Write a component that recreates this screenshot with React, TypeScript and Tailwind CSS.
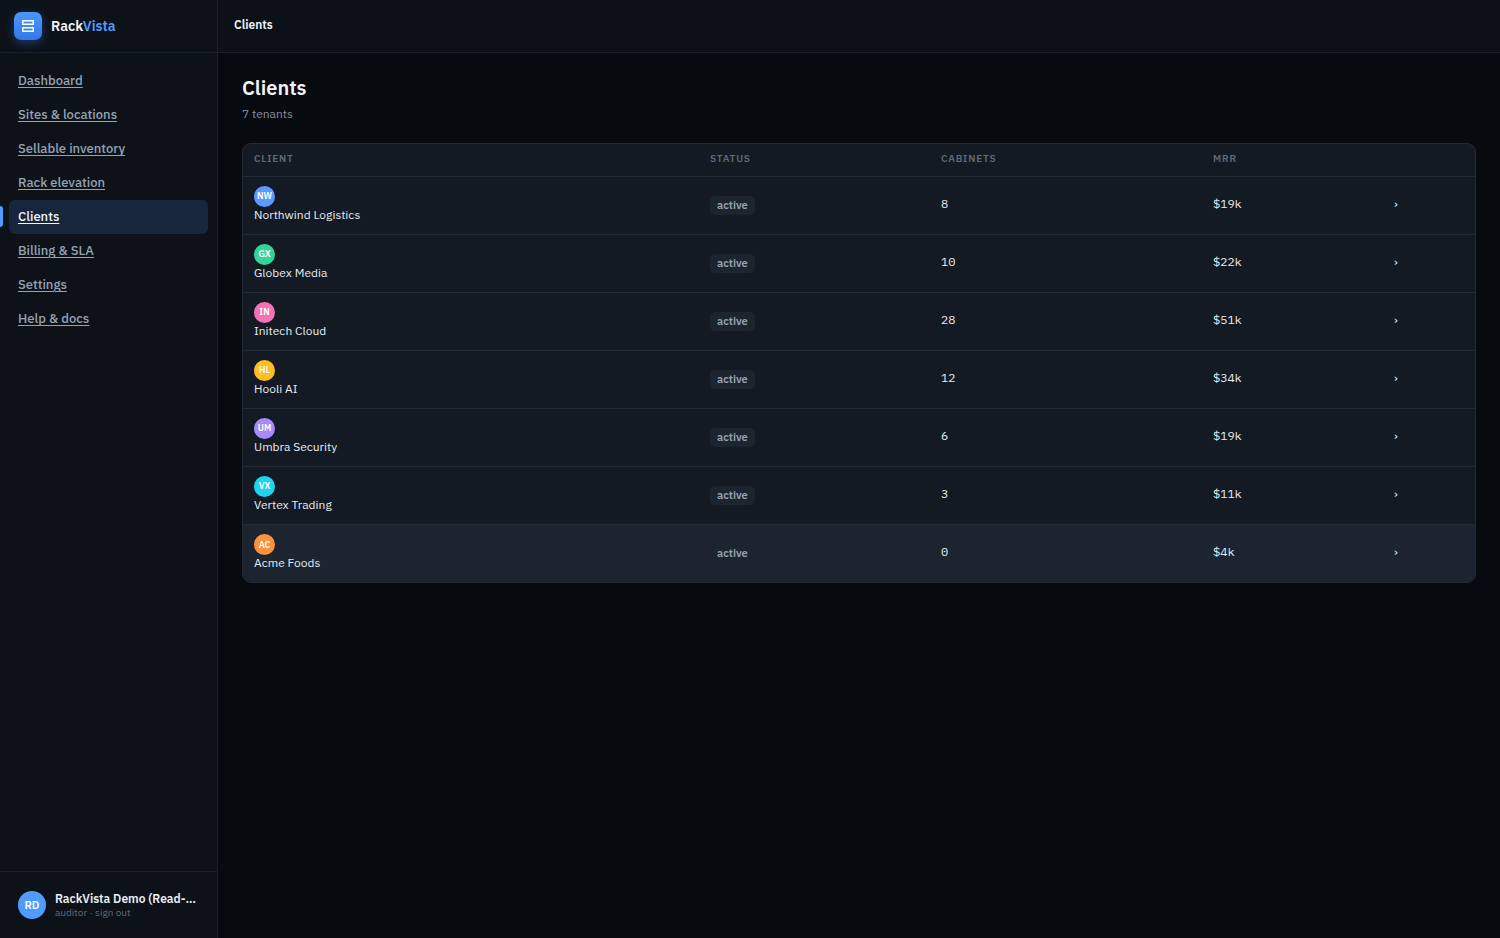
import React from "react";
import { clsx } from "clsx";

const navItems = [
  { name: "Dashboard", path: "#dashboard" },
  { name: "Sites & locations", path: "#sites" },
  { name: "Sellable inventory", path: "#inventory" },
  { name: "Rack elevation", path: "#racks" },
  { name: "Clients", path: "#clients" },
  { name: "Billing & SLA", path: "#billing" },
  { name: "Settings", path: "#settings" },
  { name: "Help & docs", path: "#help" },
];

const clients = [
  { code: "NW", name: "Northwind Logistics", status: "active", cabinets: 8, mrr: "$19k", color: "bg-[#5b9bff]" },
  { code: "GX", name: "Globex Media", status: "active", cabinets: 10, mrr: "$22k", color: "bg-[#34d399]" },
  { code: "IN", name: "Initech Cloud", status: "active", cabinets: 28, mrr: "$51k", color: "bg-[#f472b6]" },
  { code: "HL", name: "Hooli AI", status: "active", cabinets: 12, mrr: "$34k", color: "bg-[#fbbf24]" },
  { code: "UM", name: "Umbra Security", status: "active", cabinets: 6, mrr: "$19k", color: "bg-[#a78bfa]" },
  { code: "VX", name: "Vertex Trading", status: "active", cabinets: 3, mrr: "$11k", color: "bg-[#22d3ee]" },
  { code: "AC", name: "Acme Foods", status: "active", cabinets: 0, mrr: "$4k", color: "bg-[#fb923c]" },
];

const Logo = () => (
  <span className="flex size-7 items-center justify-center rounded-[7px] bg-linear-to-b from-[#4b97fd] to-[#3478e5] shadow-[0_3px_10px_rgba(59,130,246,0.35)]">
    <svg viewBox="0 0 14 14" className="size-3.5" fill="none" stroke="#fff" strokeWidth="1.5" aria-hidden="true">
      <path d="M1.75 1.75h10.5v3.5H1.75zM1.75 8.75h10.5v3.5H1.75z" />
    </svg>
  </span>
);

const Sidebar = () => (
  <aside className="flex w-[218px] shrink-0 flex-col border-r border-[#1a212b] bg-[#0d1219]">
    <div className="flex h-[53px] items-center gap-[9px] border-b border-[#1a212b] px-3.5">
      <Logo />
      <span className="text-[14px] font-semibold text-[#f1f5fa]">
        Rack<span className="text-[#4f9cff]">Vista</span>
      </span>
    </div>
    <nav className="flex flex-1 flex-col px-[9px] pt-[11px]">
      {navItems.map((item) => (
        <a
          key={item.name}
          href={item.path}
          className={clsx(
            "relative flex h-[34px] items-center rounded-md px-[9px] text-[13px] font-medium underline underline-offset-2",
            item.name === "Clients" ? "bg-[#17263c] text-[#f1f5fa]" : "text-[#94a3b3]"
          )}
        >
          {item.name === "Clients" && (
            <span className="absolute -left-[9px] top-1.5 h-[21px] w-[3px] rounded-r-sm bg-[#4f9cff]" />
          )}
          {item.name}
        </a>
      ))}
    </nav>
    <div className="border-t border-[#1a212b] px-[9px] py-[9px]">
      <button type="button" className="flex h-12 w-full items-center gap-[9px] pl-[9px] text-left">
        <span className="flex size-7 shrink-0 items-center justify-center rounded-full bg-[#4f9cff] text-[11px] font-semibold text-white">
          RD
        </span>
        <span className="whitespace-nowrap">
          <span className="block text-[12px] leading-[15px] font-semibold text-[#e9eef5]">
            RackVista Demo (Read-…
          </span>
          <span className="block text-[10px] leading-[14px] text-[#5d6b7b]">auditor · sign out</span>
        </span>
      </button>
    </div>
  </aside>
);

const ClientsTable = () => (
  <div className="overflow-hidden rounded-[9px] border border-[#222a35] bg-[#141a23]">
    <table className="w-full table-fixed text-left text-[12px] text-[#e6ecf3]">
      <colgroup>
        <col className="w-[456px]" />
        <col className="w-[231px]" />
        <col className="w-[272px]" />
        <col className="w-[181px]" />
        <col className="w-[92px]" />
      </colgroup>
      <thead>
        <tr className="h-8 border-b border-[#222a35] text-[10px] tracking-[0.08em] text-[#5d6b7b] uppercase">
          <th className="px-[11px] pb-0.5 font-semibold">Client</th>
          <th className="px-[11px] pb-0.5 font-semibold">Status</th>
          <th className="px-[11px] pb-0.5 font-semibold">Cabinets</th>
          <th className="px-[11px] pb-0.5 font-semibold">MRR</th>
          <td />
        </tr>
      </thead>
      <tbody>
        {clients.map((client) => (
          <tr
            key={client.code}
            className="h-[58px] border-b border-[#222a35] last:border-b-0 last:bg-[#1c2430]"
          >
            <td className="px-[11px] pb-0.5">
              <span
                className={clsx(
                  "flex size-[21px] items-center justify-center rounded-full text-[9px] font-semibold text-white",
                  client.color
                )}
              >
                {client.code}
              </span>
              <span className="block leading-4">{client.name}</span>
            </td>
            <td className="px-[11px]">
              <span className="inline-flex h-[19px] items-center rounded-[5px] bg-[#1c2430] px-[7px] text-[11px] font-semibold text-[#94a3b3]">
                {client.status}
              </span>
            </td>
            <td className="px-[11px] pb-0.5 font-['IBM_Plex_Mono','Liberation_Mono',monospace]">{client.cabinets}</td>
            <td className="px-[11px] pb-0.5 font-['IBM_Plex_Mono','Liberation_Mono',monospace]">{client.mrr}</td>
            <td className="px-[11px] pb-0.5">›</td>
          </tr>
        ))}
      </tbody>
    </table>
  </div>
);

const App = () => {
  return (
    <div className="flex min-h-screen bg-[#070a0f] font-['IBM_Plex_Sans','Noto_Sans',sans-serif]">
      <Sidebar />
      <div className="flex min-w-0 flex-1 flex-col">
        <header className="flex h-[53px] items-center border-b border-[#1a212b] bg-[#0c1118] px-4 pb-0.5 text-[12px] font-semibold text-[#f1f5fa]">
          Clients
        </header>
        <main className="px-6 pt-[23px] pb-12">
          <h1 className="text-[20px] leading-6 font-semibold text-[#f1f5fa]">Clients</h1>
          <p className="mt-1 mb-[19px] text-[12px] leading-5 text-[#8592a2]">7 tenants</p>
          <ClientsTable />
        </main>
      </div>
    </div>
  );
};

export default App;
